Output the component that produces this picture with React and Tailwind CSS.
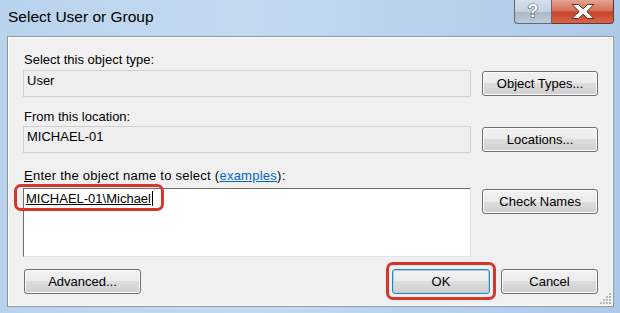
import React from 'react'

const btn =
  'h-[25px] rounded-[3px] border border-[#707070] bg-[linear-gradient(#f2f2f2_0%,#ebebeb_50%,#dddddd_50%,#cfcfcf_100%)] shadow-[inset_0_0_0_1px_#fbfbfb] text-[13px] leading-[16px] text-black'

const field =
  'h-[27px] w-[449px] border border-[#d0d0d0] bg-[#efefef] pl-[3px] pt-[2px] text-[13px] leading-[16px] text-black'

export default function App() {
  return (
    <div className="flex h-[313px] w-[620px] flex-col overflow-hidden bg-[linear-gradient(90deg,#bad3ec_0%,#c3daf1_40%,#adc9e8_100%)] font-['Liberation_Sans',Arial,sans-serif]">
      {/* Title bar */}
      <div className="flex h-[36px] shrink-0 items-start justify-between">
        <div className="pl-[8px] pt-[8px] text-[15.5px] leading-[18px] text-black">Select User or Group</div>
        <div className="mr-[6px] flex h-[24px]">
          <div className="flex w-[38px] items-center justify-center rounded-bl-[4px] border border-t-0 border-[#5d6b7d] bg-[linear-gradient(#d6e0ec_0%,#c3d0df_50%,#a9b8c9_51%,#bfcad8_100%)] pb-[1px] text-[18px] font-bold leading-none text-white [-webkit-text-stroke:1.2px_#4d5866] [paint-order:stroke_fill]">
            ?
          </div>
          <div className="flex w-[62px] items-center justify-center rounded-br-[4px] border border-l-0 border-t-0 border-[#5d3a34] bg-[linear-gradient(#e7a593_0%,#d7705b_45%,#c7442c_55%,#d8654a_100%)]">
            <svg width="28" height="17" viewBox="0 0 28 17">
              <path d="M3 1.5h6.5l4.5 4.3 4.5-4.3H25l-7.2 7 7.2 7h-6.5L14 11.2l-4.5 4.3H3l7.2-7z" fill="#fff" stroke="#5b3028" strokeWidth="1" strokeLinejoin="round" />
            </svg>
          </div>
        </div>
      </div>

      {/* Panel */}
      <div className="relative mb-[6px] ml-[7px] mr-[6px] flex-1 border border-[#8d98a6] bg-[#f0f0f0] px-[15px] pt-[15px] text-[13px] leading-[16px] text-black shadow-[inset_0_0_0_1px_#ffffff]">
        <div className="pl-[1px]">Select this object type:</div>
        <div className="mt-[2px] flex items-center gap-[11px]">
          <div className={field}>User</div>
          <button className={`${btn} w-[116px]`}>Object Types...</button>
        </div>

        <div className="mt-[12px] pl-[1px]">From this location:</div>
        <div className="mt-[1px] flex items-center gap-[11px]">
          <div className={field}>MICHAEL-01</div>
          <button className={`${btn} w-[116px]`}>Locations...</button>
        </div>

        <div className="mt-[15px] pl-[1px] tracking-[0.25px]">
          <span className="underline">E</span>nter the object name to select (
          <span className="text-[#0066cc] underline">examples</span>):
        </div>
        <div className="mt-[4px] flex items-start gap-[11px]">
          <div className="relative h-[69px] w-[449px] border border-b-[#e3e3e3] border-l-[#6e6e6e] border-r-[#e3e3e3] border-t-[#6e6e6e] bg-white pl-[2px] pt-[2px]">
            <span className="underline">MICHAEL-01\Michael</span>
            <span className="ml-[1px] inline-block h-[15px] w-[1px] bg-black align-[-3px]"></span>
            <div className="absolute left-[-10px] top-[-5px] h-[27px] w-[150px] rounded-[7px] border-[3px] border-[#d8352a]"></div>
          </div>
          <button className={`${btn} mt-[1px] w-[116px]`}>Check Names</button>
        </div>

        <div className="mt-[12px] flex items-center pl-[1px]">
          <button className={`${btn} w-[117px]`}>Advanced...</button>
          <div className="relative ml-auto">
            <button className="h-[25px] w-[98px] rounded-[3px] border border-[#3c7fb1] bg-[linear-gradient(#f2f2f2_0%,#ebebeb_50%,#dddddd_50%,#cfcfcf_100%)] text-[13px] leading-[16px] text-black shadow-[inset_0_0_0_1px_#9fd3f2]">
              OK
            </button>
            <div className="absolute left-[-6px] top-[-7px] h-[38px] w-[110px] rounded-[7px] border-[3px] border-[#d8352a]"></div>
          </div>
          <button className={`${btn} ml-[11px] w-[97px]`}>Cancel</button>
        </div>

        {/* Resize grip */}
        <svg className="absolute bottom-[2px] right-[2px]" width="11" height="11" viewBox="0 0 11 11">
          {[[9, 1], [6, 4], [9, 4], [3, 7], [6, 7], [9, 7], [0, 10], [3, 10], [6, 10], [9, 10]].map(([x, y]) => (
            <rect key={`${x}-${y}`} x={x} y={y - 1} width="2" height="2" fill="#b8b8b8" />
          ))}
        </svg>
      </div>
    </div>
  )
}
